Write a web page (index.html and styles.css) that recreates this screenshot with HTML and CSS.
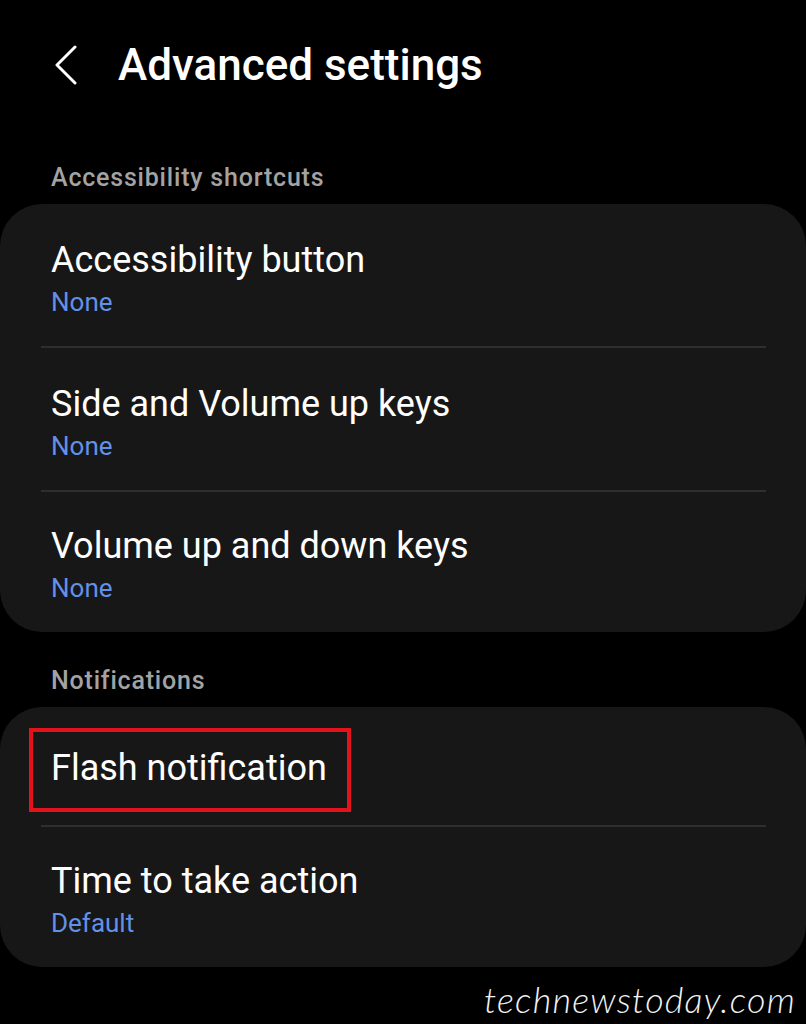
FILE: index.html
```html
<!DOCTYPE html>
<html lang="en">

<head>
    <meta charset="UTF-8">
    <meta name="viewport" content="width=device-width, initial-scale=1.0">
    <title>Advanced settings</title>
    <link rel="stylesheet" href="styles.css">
</head>

<body>
    <div id="screen">
        <!-- top bar -->
        <div id="top-bar">
            <svg class="back" width="24" height="40" viewBox="0 0 24 40">
                <polyline points="21,2 3,20 21,38" fill="none" stroke="#fff" stroke-width="3" stroke-linecap="round" stroke-linejoin="round" />
            </svg>
            <h1>Advanced settings</h1>
        </div>

        <p class="group-label">Accessibility shortcuts</p>
        <div class="card">
            <div class="row">
                <p class="row-title">Accessibility button</p>
                <p class="row-value">None</p>
            </div>
            <div class="divider"></div>
            <div class="row">
                <p class="row-title">Side and Volume up keys</p>
                <p class="row-value">None</p>
            </div>
            <div class="divider"></div>
            <div class="row last">
                <p class="row-title">Volume up and down keys</p>
                <p class="row-value">None</p>
            </div>
        </div>

        <p class="group-label second">Notifications</p>
        <div class="card">
            <div class="row single">
                <p class="row-title">Flash notification</p>
                <div class="mark"></div>
            </div>
            <div class="divider"></div>
            <div class="row last">
                <p class="row-title">Time to take action</p>
                <p class="row-value">Default</p>
            </div>
        </div>

        <p id="site">technewstoday.com</p>
    </div>
</body>

</html>
```

FILE: styles.css
```css
* {
    margin: 0;
    padding: 0;
    box-sizing: border-box;
}

body,
html {
    height: 100%;
    width: 100%;
    background-color: #000;
    font-family: Roboto, "Noto Sans", sans-serif;
    overflow: hidden;
}

#screen {
    width: 100%;
    display: flex;
    flex-direction: column;
}

#top-bar {
    height: 89px;
    padding-top: 41px;
    padding-left: 54px;
    display: flex;
    align-items: center;
    gap: 40px;
}

#top-bar h1 {
    font-size: 44px;
    font-weight: 500;
    color: #fff;
    line-height: 48px;
}

.group-label {
    margin-top: 73px;
    padding-left: 51px;
    font-size: 25px;
    line-height: 32px;
    letter-spacing: 0.8px;
    color: #a3a3a3;
    font-weight: 500;
}

.group-label.second {
    margin-top: 33px;
}

.card {
    margin-top: 10px;
    width: 100%;
    background-color: #171717;
    border-radius: 42px;
    display: flex;
    flex-direction: column;
}

.row {
    position: relative;
    padding: 35px 51px 23px;
}

.row.last {
    padding-top: 33px;
    padding-bottom: 23px;
}

.row.single {
    height: 118px;
    padding-top: 4px;
    padding-bottom: 0;
    display: flex;
    align-items: center;
}

.row-title {
    font-size: 36px;
    line-height: 42px;
    color: #fff;
}

.row-value {
    font-size: 26px;
    line-height: 42px;
    color: #6391e6;
}

.divider {
    height: 2px;
    margin: 0 40px 0 41px;
    background-color: #2e2e2e;
}

/* red highlight round the flash item */
.mark {
    position: absolute;
    left: 29px;
    top: 21px;
    width: 322px;
    height: 84px;
    border: 4px solid #e3121b;
}

#site {
    margin-top: 12px;
    padding-right: 10px;
    text-align: right;
    font-family: Lato, "Open Sans", sans-serif;
    font-style: italic;
    font-weight: 300;
    font-size: 36px;
    line-height: 40px;
    letter-spacing: 1.2px;
    color: #f2f2f2;
}
```
